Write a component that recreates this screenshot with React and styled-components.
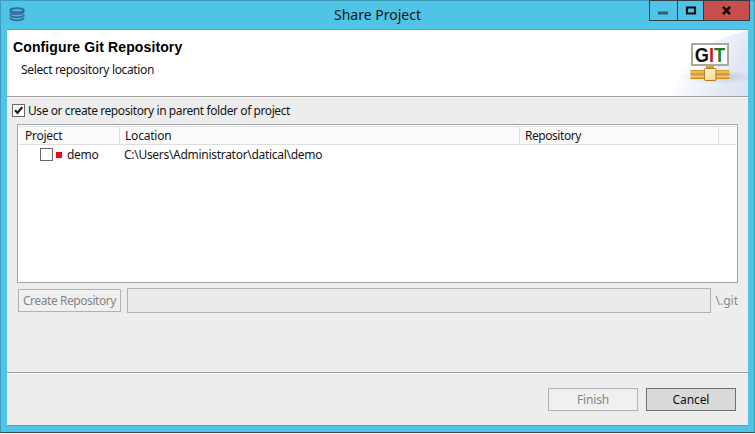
import React from "react";
import styled, { createGlobalStyle } from "styled-components";

const GlobalStyle = createGlobalStyle`
  * { box-sizing: border-box; }
  body { margin: 0; background: #f4f4f4; font-family: "Noto Sans", "Open Sans", sans-serif; font-size: 12px; color: #161616; overflow: hidden; }
`;
const Text = styled.span`
  white-space: pre;
  letter-spacing: ${(p) => p.$ls || 0}px;
`;
const Window = styled.main`
  width: 755px;
  height: 433px;
  background: #50c4e6;
  border: 1px solid #3b9dba;
  border-bottom-color: #3c4a50;
  padding: 0 6px;
  display: flex;
  flex-direction: column;
`;
const TitleBar = styled.header`
  height: 28px;
  flex: none;
  display: grid;
  grid-template-columns: 327px 1fr 101px;
  margin-right: -2px;
`;
const AppIcon = styled.svg`
  margin: 6px 0 0 2px;
`;
const Title = styled.h1`
  margin: 0;
  font-size: 14px;
  font-weight: 400;
  line-height: 27px;
`;
const WindowButtons = styled.div`
  display: flex;
  height: 21px;
  margin-top: -1px;
  border: 1px solid #303c42;
`;
const WindowButton = styled.button`
  width: ${(p) => p.$width}px;
  padding: 0;
  border: 0;
  border-left: ${(p) => (p.$first ? 0 : 1)}px solid #303c42;
  background: ${(p) => (p.$close ? "#c7504c" : "#50c4e6")};
  svg { display: block; }
`;
const Content = styled.div`
  height: 397px;
  flex: none;
  background: #ededed;
  border: solid #46a6c2;
  border-width: 1px 0;
  display: flex;
  flex-direction: column;
`;
const Banner = styled.section`
  height: 67px;
  flex: none;
  display: flex;
  justify-content: space-between;
  background: #fff;
  border-bottom: 1px solid #a0a0a0;
`;
const Heading = styled.h2`
  margin: 8px 0 0 6px;
  font: bold 14px/18px "Liberation Sans", Arial, sans-serif;
  color: #000;
`;
const Subheading = styled.p`
  margin: 5px 0 0 14px;
  line-height: 17px;
`;
const BannerArt = styled.svg`
  display: block;
`;
const Form = styled.section`
  height: 276px;
  flex: none;
  padding: 5px 10px 0;
  border-top: 1px solid #f8f8f8;
  border-bottom: 1px solid #a0a0a0;
`;
const CheckRow = styled.label`
  display: flex;
  align-items: center;
  gap: 3px;
  height: 15px;
  margin: 0 0 6px -5px;
  line-height: 15px;
`;
const Check = styled.svg`
  flex: none;
`;
const Table = styled.div`
  height: 159px;
  padding: 1px;
  border: 1px solid #a0a3a8;
  background: #fff;
  width: 721px;
`;
const HeadRow = styled.div`
  display: grid;
  grid-template-columns: 101px 400px 199px 1fr;
  height: 19px;
  background: #fbfbfb;
  border: solid #dedede;
  border-width: 1px 0 1px;
`;
const HeadCell = styled.div`
  padding-left: ${(p) => (p.$first ? 6 : 5)}px;
  line-height: 18px;
  border-right: ${(p) => (p.$last ? 0 : 1)}px solid #dedede;
`;
const Row = styled.div`
  display: grid;
  grid-template-columns: 105px 1fr;
  height: 19px;
  line-height: 19px;
`;
const ProjectCell = styled.div`
  display: flex;
  align-items: center;
  padding-left: 21px;
`;
const Marker = styled.i`
  width: 6px;
  height: 6px;
  margin: 0 5px 0 3px;
  background: #fb0019;
`;
const CreateRow = styled.div`
  display: flex;
  align-items: center;
  height: 25px;
  margin-top: 5px;
  color: #8b8b8b;
`;
const Button = styled.button`
  display: flex;
  align-items: center;
  justify-content: center;
  width: ${(p) => p.$width}px;
  height: 23px;
  padding: 0;
  border: 1px solid ${(p) => (p.disabled ? "#aeb3b5" : "#707070")};
  background: ${(p) => (p.disabled ? "#f0f0f0" : "#d9d9d9")};
  color: ${(p) => (p.disabled ? "#858585" : "#111")};
  font: inherit;
`;
const CreateButton = styled(Button)`
  margin: 0 6px 0 1px;
`;
const PathField = styled.input`
  width: 584px;
  height: 25px;
  margin-right: 5px;
  border: 1px solid #aeb3b5;
  background: #ebebeb;
`;
const Actions = styled.footer`
  display: flex;
  justify-content: flex-end;
  gap: 8px;
  padding: 14px 12px 0;
  border-top: 1px solid #f8f8f8;
`;

function Checkbox({ checked }) {
  return (
    <Check width="13" height="13" viewBox="0 0 13 13">
      <rect x=".5" y=".5" width="12" height="12" fill="#fff" stroke="#686868" />
      {checked && <path d="M3 6.3 5.5 9 10.2 3.2" fill="none" stroke="#151515" strokeWidth="2.1" />}
    </Check>
  );
}

function GitBanner() {
  return (
    <BannerArt width="110" height="66" viewBox="638 30 110 66">
      <defs>
        <linearGradient id="sky" gradientUnits="userSpaceOnUse" x1="686" y1="48" x2="750" y2="80">
          <stop offset="0" stopColor="#fff" />
          <stop offset=".45" stopColor="#eef2f9" />
          <stop offset="1" stopColor="#d6dfee" />
        </linearGradient>
        <linearGradient id="pipe" x1="0" y1="0" x2="0" y2="1">
          <stop offset="0" stopColor="#c98b1c" />
          <stop offset=".45" stopColor="#ffcb5e" />
          <stop offset="1" stopColor="#c47a12" />
        </linearGradient>
        <linearGradient id="joint" x1="0" y1="0" x2="1" y2="1">
          <stop offset="0" stopColor="#fffdf0" />
          <stop offset="1" stopColor="#f7d27c" />
        </linearGradient>
        <radialGradient id="shade">
          <stop offset="0" stopColor="#a3adc0" stopOpacity=".6" />
          <stop offset="1" stopColor="#b9c5da" stopOpacity="0" />
        </radialGradient>
      </defs>
      <path d="M672 96C680 65 706 37 748 31V96Z" fill="url(#sky)" />
      <path d="M722 96C736 84 744 68 748 51V96Z" fill="#e4eaf5" opacity=".4" />
      <ellipse cx="720" cy="77" rx="40" ry="7" fill="url(#shade)" />
      <rect x="692" y="44" width="36" height="21" fill="#fff" stroke="#aaa99c" strokeWidth="2" />
      <text
        x="694.8"
        y="61.6"
        fontFamily="Liberation Sans, Arial, sans-serif"
        fontSize="20"
        fontWeight="bold"
        textLength="30.4"
        lengthAdjust="spacingAndGlyphs"
      >
        <tspan fill="#101010">G</tspan><tspan fill="#d5152b">I</tspan><tspan fill="#148126">T</tspan>
      </text>
      <rect x="706" y="66" width="8" height="4" fill="#d89b30" />
      <rect x="690.5" y="70" width="39" height="4.5" fill="url(#pipe)" />
      <rect x="690.5" y="74.5" width="39" height="4.5" fill="url(#pipe)" />
      <rect x="704.5" y="68.5" width="11.5" height="12" rx="1" fill="url(#joint)" stroke="#bd7b1c" />
    </BannerArt>
  );
}

export default function App() {
  return (
    <>
      <GlobalStyle />
      <Window>
        <TitleBar>
          <AppIcon width="16" height="15" viewBox="0 0 16 15" fill="none" stroke="#386a9c" strokeWidth="1.9">
            <ellipse cx="8" cy="3.2" rx="6.8" ry="2" />
            <path d="M1.2 4.5c0 3.6 13.6 3.6 13.6 0M1.2 7.6c0 3.6 13.6 3.6 13.6 0M1.2 10.6c0 3.7 13.6 3.7 13.6 0" />
          </AppIcon>
          <Title><Text>Share Project</Text></Title>
          <WindowButtons>
            <WindowButton $width={27} $first aria-label="Minimize">
              <svg width="27" height="19"><path d="M8 10.5h10v3H8z" fill="#2c6476" /></svg>
            </WindowButton>
            <WindowButton $width={26} aria-label="Maximize">
              <svg width="25" height="19"><path d="M9 6.5h8v6H9z" fill="none" stroke="#0a0a0a" strokeWidth="2.2" /></svg>
            </WindowButton>
            <WindowButton $width={46} $close aria-label="Close">
              <svg width="45" height="19"><path d="m19 5.8 7 7.4m0-7.4-7 7.4" stroke="#0a0a0a" strokeWidth="2.6" /></svg>
            </WindowButton>
          </WindowButtons>
        </TitleBar>
        <Content>
          <Banner>
            <div>
              <Heading><Text $ls={0.12}>Configure Git Repository</Text></Heading>
              <Subheading><Text $ls={-0.35}>Select repository location</Text></Subheading>
            </div>
            <GitBanner />
          </Banner>
          <Form>
            <CheckRow>
              <Checkbox checked />
              <Text $ls={-0.41}>Use or create repository in parent folder of project</Text>
            </CheckRow>
            <Table>
              <HeadRow>
                <HeadCell $first><Text $ls={-0.25}>Project</Text></HeadCell>
                <HeadCell><Text $ls={-0.2}>Location</Text></HeadCell>
                <HeadCell><Text $ls={-0.45}>Repository</Text></HeadCell>
                <HeadCell $last />
              </HeadRow>
              <Row>
                <ProjectCell><Checkbox /><Marker /><Text $ls={-0.3}>demo</Text></ProjectCell>
                <Text $ls={-0.29}>C:\Users\Administrator\datical\demo</Text>
              </Row>
            </Table>
            <CreateRow>
              <CreateButton $width={103} disabled><Text $ls={-0.43}>Create Repository</Text></CreateButton>
              <PathField disabled />
              <Text>\.git</Text>
            </CreateRow>
          </Form>
          <Actions>
            <Button $width={90} disabled><Text $ls={-0.2}>Finish</Text></Button>
            <Button $width={90}><Text $ls={-0.1}>Cancel</Text></Button>
          </Actions>
        </Content>
      </Window>
    </>
  );
}
